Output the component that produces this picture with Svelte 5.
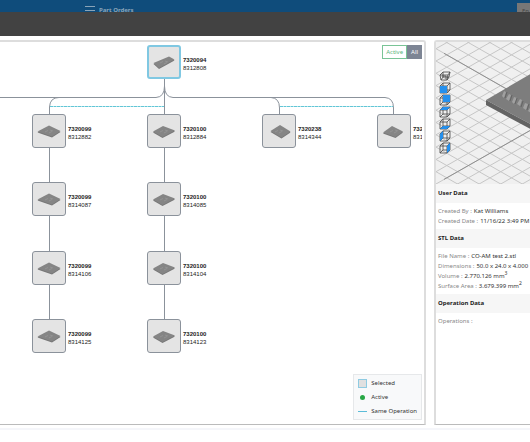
<script>
  const HALF = 17;
  const columns = [49, 164, 279, 394];
  const rows = [20, 89, 157, 226, 294];

  // outline of each part thumbnail, centred on 0,0
  const shapes = {
    bar: '-10.5,1 5,-5.5 10.5,-2.5 -5,6',
    left: '-11.5,.5 0,-5.5 11.5,0 3,5.5',
    flat: '-11,.5 -1,-5 11,-.5 -1.5,6',
    tall: '-8.5,0 1,-6 11.5,.5 2.5,6.5',
    right: '-11,1.5 -2,-5 9,.5 1.5,6'
  };

  const nodes = [
    { order: '7320094', part: '8312808', col: 1, row: 0, shape: 'bar' },
    { order: '7320099', part: '8312882', col: 0, row: 1, shape: 'left' },
    { order: '7320100', part: '8312884', col: 1, row: 1, shape: 'flat' },
    { order: '7320238', part: '8314344', col: 2, row: 1, shape: 'tall' },
    { order: '732', part: '831', col: 3, row: 1, shape: 'right' },
    { order: '7320099', part: '8314087', col: 0, row: 2, shape: 'left' },
    { order: '7320100', part: '8314085', col: 1, row: 2, shape: 'flat' },
    { order: '7320099', part: '8314106', col: 0, row: 3, shape: 'left' },
    { order: '7320100', part: '8314104', col: 1, row: 3, shape: 'flat' },
    { order: '7320099', part: '8314125', col: 0, row: 4, shape: 'left' },
    { order: '7320100', part: '8314123', col: 1, row: 4, shape: 'flat' }
  ];

  const views = [
    { name: 'Isometric', face: '' },
    { name: 'Front', face: 'M1 4h7v7H1z' },
    { name: 'Back', face: 'M4 1h7v7H4z' },
    { name: 'Top', face: 'M1 4l3-3h7L8 4z' },
    { name: 'Bottom', face: 'M1 11l3-3h7l-3 3z' },
    { name: 'Left', face: 'M1 4l3-3v7l-3 3z' },
    { name: 'Right', face: 'M8 4l3-3v7l-3 3z' }
  ];

  const sections = [
    {
      title: 'User Data',
      fields: [
        { label: 'Created By', value: 'Kat Williams' },
        { label: 'Created Date', value: '11/16/22 3:49 PM' }
      ]
    },
    {
      title: 'STL Data',
      fields: [
        { label: 'File Name', value: 'CO-AM test 2.stl' },
        { label: 'Dimensions', value: '50.0 x 24.0 x 4.000' },
        { label: 'Volume', value: '2.770.126 mm', power: '3' },
        { label: 'Surface Area', value: '3.679.399 mm', power: '2' }
      ]
    },
    { title: 'Operation Data', fields: [{ label: 'Operations', value: '' }] }
  ];

  const gridLines = Array.from({ length: 32 }, (_, i) => (i - 10) * 12.3 + 6.7);

  let selected = $state(0);
  let filter = $state('all');
</script>

<div class="page">
  <header class="topbar">
    <svg class="menu" viewBox="0 0 10 6" aria-hidden="true">
      <path d="M0 .5h10M0 4.5h10" stroke="#8aa4b8" />
    </svg>
    <span class="title">Part Orders</span>
    <button class="lang">En</button>
  </header>
  <div class="modal-head"></div>

  <main class="content">
    <section class="panel tree">
      <div class="canvas">
        <svg class="links" aria-hidden="true">
          <g fill="none" stroke="#8b929b">
            <path d="M0 55.500H156Q164.500 55 164.500 44Q164.500 55 173 55.500H385Q393.500 56 393.500 66V73" />
            <path d="M49.500 73V65Q50 55.500 59 55.500M271 55.500Q279.500 56 279.500 66V73" />
            <path d="M164.500 37V294M49.500 89V294" />
          </g>
          <path d="M50 64.500H164M280 64.500H393" stroke="#62c6d6" stroke-dasharray="3 .5" />
        </svg>
        {#each nodes as node, i}
          <div class="node" style="left: {columns[node.col] - HALF}px; top: {rows[node.row] - HALF}px">
            <button
              class="thumb"
              class:selected={selected === i}
              aria-label="Order {node.order}"
              onclick={() => (selected = i)}
            >
              <svg viewBox="-15 -15 30 30">
                <polygon points={shapes[node.shape]} fill="#777" transform="translate(0 1)" />
                <polygon points={shapes[node.shape]} fill="#858585" />
                <path d="M-4 1l3-1.500M0 2l3-1.500M1-1l3 1" stroke="#979797" stroke-width=".8" />
              </svg>
            </button>
            <div class="label">
              <b>{node.order}</b>
              <span>{node.part}</span>
            </div>
          </div>
        {/each}

        <div class="filter">
          <button class:on={filter === 'active'} onclick={() => (filter = 'active')}>Active</button>
          <button class:on={filter === 'all'} onclick={() => (filter = 'all')}>All</button>
        </div>

        <ul class="legend">
          <li><i class="key box"></i>Selected</li>
          <li><i class="key dot"></i>Active</li>
          <li><i class="key line"></i>Same Operation</li>
        </ul>
      </div>
    </section>

    <section class="panel details">
      <div class="viewer">
        <svg class="scene" viewBox="0 0 200 142" aria-hidden="true">
          {#each gridLines as y}
            <path d="M0 {y}L200 {y + 114}M0 {y}L200 {y - 114}" stroke="#c6c6c6" />
          {/each}
          <path d="M8 11.300L95 61M8 137.400L95 88" stroke="#8f8f8f" />
          <path d="M50 58L96 31L170 74L124 98z" fill="#7d7d7d" />
          <path d="M50 58L124 98V103L50 63z" fill="#636363" />
          <path
            d="M66 54l2-5 2 1-2 6zM70 57l3-5 2 1-2 6zM76 60l2-5 3 1-3 6zM81 62l3-5 2 1-2 6zM87 66l2-5 3 1-2 6zM92 69l3-5 2 1-2 6z"
            fill="#a0a0a0"
          />
          <path d="M69 56l2-6M74 59l2-6M79 62l2-6M85 65l2-6M91 68l2-6" stroke="#656565" />
        </svg>
        <div class="views">
          {#each views as view}
            <button aria-label="{view.name} view">
              <svg viewBox="0 0 12 12">
                {#if view.face}
                  <path d="M1 4h7v7H1zM4 1h7v7H4zM1 4l3-3M8 4l3-3M8 11l3-3M1 11l3-3" fill="none" stroke="#444" stroke-width=".8" />
                  <path d={view.face} fill="#2490ee" />
                {:else}
                  <path d="M1 5l3-3 7 0-2 3zM1 5l1 5h6l1-5M11 2l-1 5-2 3M4 2v5h6M2 10l2-3M3 6h4v3" fill="none" stroke="#444" stroke-width=".8" />
                {/if}
              </svg>
            </button>
          {/each}
        </div>
      </div>
      {#each sections as section}
        <h2>{section.title}</h2>
        <dl>
          {#each section.fields as field}
            <div>
              <dt>{field.label} :</dt>
              <dd>{field.value}{#if field.power}<sup>{field.power}</sup>{/if}</dd>
            </div>
          {/each}
        </dl>
      {/each}
    </section>
  </main>
  <div class="footer-line"></div>
</div>

<style>
  :global(body) {
    background: #fff;
    overflow: hidden;
  }

  .page {
    font-family: "Noto Sans", "Open Sans", sans-serif;
    font-size: 6px;
    color: #333;
  }

  button {
    padding: 0;
    border: 0;
    background: none;
    font: inherit;
    color: inherit;
    cursor: pointer;
  }

  .topbar {
    display: flex;
    align-items: flex-start;
    height: 12px;
    padding-left: 85px;
    overflow: hidden;
    background: #0f4c7b;
  }

  .menu {
    width: 10px;
    height: 6px;
    margin-top: 6px;
  }

  .title {
    margin: 5px auto 0 4px;
    line-height: 10px;
    font-weight: bold;
    color: #8aa4b8;
  }

  .lang {
    width: 13px;
    height: 16px;
    margin-top: 3px;
    padding-left: 5px;
    background: #777;
    color: #444;
    text-align: left;
  }

  .modal-head {
    height: 24px;
    background: #424242;
  }

  .content {
    display: grid;
    grid-template-columns: minmax(0, 1fr) 96px;
    gap: 8px;
    padding-top: 4px;
  }

  .panel {
    border: 1px solid #bbb;
    border-top: 2px solid #ddd;
    border-right: 2px solid #ddd;
    overflow: hidden;
  }

  .tree {
    padding-right: 2px;
    border-left: 0;
    border-top-right-radius: 3px;
  }

  .details {
    border-left: 2px solid #ddd;
    border-right: 0;
    border-top-left-radius: 3px;
    white-space: nowrap;
  }

  .canvas {
    position: relative;
    height: 382px;
    overflow: hidden;
  }

  .links {
    position: absolute;
    width: 100%;
    height: 100%;
  }

  .node {
    position: absolute;
    display: flex;
    gap: 2px;
  }

  .thumb {
    box-sizing: border-box;
    width: 34px;
    height: 34px;
    border: 1px solid #8b929b;
    border-radius: 3px;
    background: #e4e4e4;
  }

  .thumb.selected {
    border: 2px solid #80c8e2;
  }

  .thumb svg {
    display: block;
    width: 30px;
    height: 30px;
    margin: auto;
  }

  .label {
    display: flex;
    flex-direction: column;
    padding-top: 11px;
    font-family: "Liberation Sans", Arial, sans-serif;
    line-height: 8px;
    color: #222;
  }

  .filter {
    position: absolute;
    top: 3px;
    right: 0;
    display: flex;
  }

  .filter button {
    height: 14px;
    padding: 0 3px;
    border: 1px solid #79c496;
    color: #5cb57e;
    line-height: 12px;
  }

  .filter button.on {
    border-color: #7d8594;
    background: #7d8594;
    color: #fff;
  }

  .legend {
    position: absolute;
    right: 0;
    bottom: 4px;
    margin: 0;
    padding: 1px 4px;
    border: 1px solid #e6e8ea;
    background: #f8f9fa;
    list-style: none;
  }

  .legend li {
    display: flex;
    align-items: center;
    gap: 4px;
    height: 14px;
  }

  .key {
    box-sizing: border-box;
    width: 9px;
    height: 9px;
  }

  .key.box {
    border: 1px solid #8fcbe2;
    background: #e0e0e0;
  }

  .key.dot {
    width: 5px;
    height: 5px;
    margin: 0 2px;
    border-radius: 50%;
    background: #28a745;
  }

  .key.line {
    height: 1px;
    background: #5bbcd8;
  }

  .viewer {
    position: relative;
    height: 142px;
    overflow: hidden;
    background: #f0f0f0;
  }

  .scene {
    display: block;
    width: 200px;
    height: 142px;
  }

  .views {
    position: absolute;
    top: 28px;
    left: 3px;
    display: flex;
    flex-direction: column;
  }

  .views button {
    height: 12px;
  }

  .views svg {
    display: block;
    width: 12px;
    height: 12px;
  }

  h2 {
    margin: 0;
    padding: 0 2px;
    background: #f6f6f6;
    font-size: 6px;
    line-height: 19px;
    color: #222;
  }

  dl {
    margin: 0;
    padding: 3px 2px;
  }

  dl div {
    display: flex;
    gap: 2px;
    height: 10px;
    line-height: 10px;
  }

  dt {
    color: #888;
  }

  dd {
    margin: 0;
  }

  sup {
    font-size: 5px;
    line-height: 1px;
  }

  .footer-line {
    height: 2px;
    margin-top: 3px;
    background: #f5f6fa;
  }
</style>
